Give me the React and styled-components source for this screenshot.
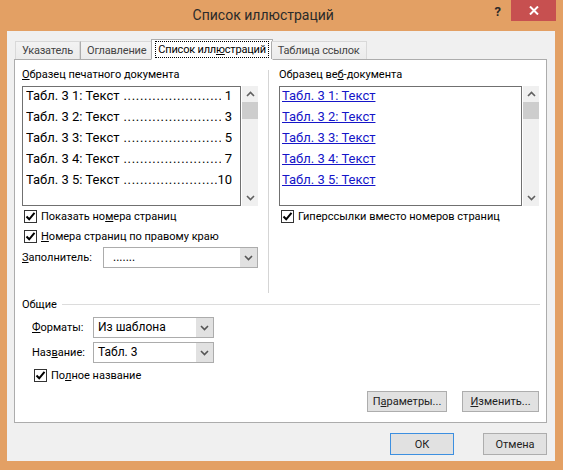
import React from 'react';
import styled, { createGlobalStyle } from 'styled-components';

const GlobalStyle = createGlobalStyle`
  html, body {
    margin: 0;
    padding: 0;
    background: #e3a064;
  }
  body {
    font-family: Roboto, 'Noto Sans', sans-serif;
    font-size: 11px;
    color: #000;
  }
`;

const Window = styled.div`
  width: 563px;
  height: 470px;
  background: #e3a064;
  display: flex;
  flex-direction: column;
`;

const TitleBar = styled.div`
  height: 31px;
  display: flex;
  align-items: flex-start;
  flex-shrink: 0;
`;

const Title = styled.div`
  flex: 1;
  padding-left: 32px;
  text-align: center;
  font-size: 14px;
  line-height: 31px;
  color: #2a2a2a;
`;

const HelpMark = styled.span`
  font-weight: bold;
  font-size: 13px;
  line-height: 24px;
  color: #2a2a2a;
  margin-right: 10px;
`;

const CloseButton = styled.div`
  width: 45px;
  height: 21px;
  margin-right: 7px;
  background: #c75050;
  display: flex;
  align-items: center;
  justify-content: center;
`;

const Client = styled.div`
  flex: 1;
  margin: 0 8px 9px 7px;
  background: #f0f0f0;
  padding: 7px 8px 0 7px;
  display: flex;
  flex-direction: column;
`;

const TabRow = styled.div`
  height: 21px;
  display: flex;
  align-items: flex-end;
  padding-left: 1px;
  position: relative;
  z-index: 1;
`;

const Tab = styled.div`
  height: ${p => (p.$active ? '21px' : '18px')};
  box-sizing: border-box;
  padding: 0 ${p => (p.$active ? '4px' : '6px')};
  border: 1px solid ${p => (p.$active ? '#acacac' : '#d9d9d9')};
  border-bottom: ${p => (p.$active ? '1px solid #fff' : 'none')};
  margin-left: ${p => (p.$active ? '-2px' : '0')};
  margin-right: ${p => (p.$active ? '-2px' : '0')};
  background: ${p => (p.$active ? '#fff' : 'linear-gradient(#f3f3f3, #ebebeb)')};
  color: ${p => (p.$active ? '#000' : '#444')};
  font-size: 11px;
  letter-spacing: -0.2px;
  display: flex;
  align-items: center;
  white-space: nowrap;
  margin-bottom: ${p => (p.$active ? '-1px' : '0')};
  & + & { border-left: ${p => (p.$active ? '1px solid #acacac' : 'none')}; }
`;

const FocusText = styled.span`
  outline: 1px dotted #000;
  padding: 0 2px;
  line-height: 15px;
`;

const Panel = styled.div`
  height: 364px;
  box-sizing: border-box;
  border: 1px solid #acacac;
  background: #fff;
  padding: 8px 7px 0 7px;
  display: flex;
  flex-direction: column;
`;

const TopSection = styled.div`
  display: grid;
  grid-template-columns: 236px 1px 260px;
  column-gap: 10px;
  height: 225px;
`;

const Divider = styled.div`
  background: #d5d5d5;
  margin-top: 2px;
`;

const Column = styled.div`
  display: flex;
  flex-direction: column;
`;

const GroupLabel = styled.div`
  line-height: 14px;
  height: 14px;
  margin-bottom: 4px;
  white-space: nowrap;
`;

const PreviewRow = styled.div`
  display: flex;
  height: 120px;
`;

const ListBox = styled.div`
  flex: 1;
  border: 1px solid #707070;
  background: #fff;
  overflow: hidden;
  padding: ${p => (p.$web ? '0 0 0 2px' : '0 8px 0 3px')};
  font-size: 13px;
`;

const Entry = styled.div`
  height: 21px;
  line-height: 18px;
  display: flex;
  white-space: nowrap;
  overflow: hidden;
`;

const Leader = styled.span`
  flex: 1;
  overflow: hidden;
  margin: 0 ${p => p.$gap}px 0 4px;
  &::before {
    content: '..................................................................................';
    letter-spacing: 0.7px;
  }
`;

const Link = styled.span`
  color: #1515c8;
  text-decoration: underline;
`;

const ScrollBar = styled.div`
  width: 16px;
  margin-left: 1px;
  background: #f0f0f0;
  display: flex;
  flex-direction: column;
  align-items: center;
`;

const ScrollArrow = styled.div`
  height: 16px;
  display: flex;
  align-items: center;
  justify-content: center;
`;

const Thumb = styled.div`
  width: 16px;
  height: 17px;
  background: #cdcdcd;
`;

const ScrollSpace = styled.div`
  flex: 1;
`;

const CheckRow = styled.label`
  height: 20px;
  display: flex;
  align-items: center;
  gap: 4px;
  margin-left: ${p => p.$indent || 2}px;
  margin-top: ${p => p.$top || 0}px;
  white-space: nowrap;
`;

const Box = styled.span`
  width: 13px;
  height: 13px;
  box-sizing: border-box;
  border: 1px solid #333;
  background: #fff;
  display: flex;
  align-items: center;
  justify-content: center;
`;

const FieldRow = styled.div`
  display: flex;
  align-items: center;
  height: 21px;
  margin-top: ${p => p.$top || 0}px;
  margin-left: ${p => p.$indent || 0}px;
`;

const FieldLabel = styled.span`
  width: ${p => p.$w}px;
  white-space: nowrap;
`;

const Combo = styled.div`
  width: ${p => p.$w}px;
  height: 21px;
  box-sizing: border-box;
  border: 1px solid #acacac;
  background: #fff;
  display: flex;
`;

const ComboText = styled.span`
  flex: 1;
  padding-left: ${p => p.$pad || 4}px;
  line-height: 19px;
  font-size: 12px;
  white-space: nowrap;
`;

const ComboButton = styled.span`
  width: 17px;
  background: #e1e1e1;
  display: flex;
  align-items: center;
  justify-content: center;
`;

const SectionHead = styled.div`
  display: flex;
  align-items: center;
  height: 14px;
  margin-top: 4px;
  gap: 5px;
  &::after {
    content: '';
    flex: 1;
    height: 1px;
    background: #dcdcdc;
    margin-right: -1px;
  }
`;

const ButtonRow = styled.div`
  display: flex;
  justify-content: flex-end;
  gap: ${p => p.$gap}px;
  margin-top: ${p => p.$top}px;
`;

const Button = styled.div`
  width: ${p => p.$w}px;
  height: ${p => p.$h}px;
  box-sizing: border-box;
  border: 1px solid ${p => (p.$default ? '#3c8fe0' : '#adadad')};
  background: #e1e1e1;
  display: flex;
  align-items: center;
  justify-content: center;
  color: #222;
  white-space: nowrap;
`;

const Chevron = ({ up, color = '#555' }) => (
  <svg width="9" height="6" viewBox="0 0 9 6">
    <polyline
      points={up ? '1,5 4.5,1.5 8,5' : '1,1 4.5,4.5 8,1'}
      fill="none"
      stroke={color}
      strokeWidth="1.6"
    />
  </svg>
);

const Check = ({ checked }) => (
  <Box>
    {checked && (
      <svg width="11" height="11" viewBox="0 0 11 11">
        <path d="M1.5 5.5 L4.2 8.3 L9.5 1.8" fill="none" stroke="#000" strokeWidth="2" />
      </svg>
    )}
  </Box>
);

const Scroll = () => (
  <ScrollBar>
    <ScrollArrow><Chevron up color="#606060" /></ScrollArrow>
    <Thumb />
    <ScrollSpace />
    <ScrollArrow><Chevron color="#606060" /></ScrollArrow>
  </ScrollBar>
);

const entries = [
  ['1: Текст', '1'],
  ['2: Текст', '3'],
  ['3: Текст', '5'],
  ['4: Текст', '7'],
  ['5: Текст', '10'],
];

export default function App() {
  return (
    <>
      <GlobalStyle />
      <Window>
        <TitleBar>
          <Title>Список иллюстраций</Title>
          <HelpMark>?</HelpMark>
          <CloseButton>
            <svg width="10" height="9" viewBox="0 0 10 9">
              <path d="M1 0.5 L9 8.5 M9 0.5 L1 8.5" stroke="#fff" strokeWidth="2" />
            </svg>
          </CloseButton>
        </TitleBar>
        <Client>
          <TabRow>
            <Tab>Указатель</Tab>
            <Tab>Оглавление</Tab>
            <Tab $active>
              <FocusText>Список илл<u>ю</u>страций</FocusText>
            </Tab>
            <Tab>Таблица ссылок</Tab>
          </TabRow>
          <Panel>
            <TopSection>
              <Column>
                <GroupLabel><u>О</u>бразец печатного документа</GroupLabel>
                <PreviewRow>
                  <ListBox>
                    {entries.map(([t, n]) => (
                      <Entry key={t}>
                        <span>Табл. 3 {t}</span>
                        <Leader $gap={n.length > 1 ? 0 : 4} />
                        <span>{n}</span>
                      </Entry>
                    ))}
                  </ListBox>
                  <Scroll />
                </PreviewRow>
                <CheckRow>
                  <Check checked />
                  <span>Показать но<u>м</u>ера страниц</span>
                </CheckRow>
                <CheckRow>
                  <Check checked />
                  <span><u>Н</u>омера страниц по правому краю</span>
                </CheckRow>
                <FieldRow $top={1}>
                  <FieldLabel $w={81}><u>З</u>аполнитель:</FieldLabel>
                  <Combo $w={155}>
                    <ComboText $pad={9}>.......</ComboText>
                    <ComboButton><Chevron /></ComboButton>
                  </Combo>
                </FieldRow>
              </Column>
              <Divider />
              <Column>
                <GroupLabel>Образец ве<u>б</u>-документа</GroupLabel>
                <PreviewRow>
                  <ListBox $web>
                    {entries.map(([t]) => (
                      <Entry key={t}>
                        <Link>Табл. 3 {t}</Link>
                      </Entry>
                    ))}
                  </ListBox>
                  <Scroll />
                </PreviewRow>
                <CheckRow>
                  <Check checked />
                  <span>Гиперссылки вместо номеров страниц</span>
                </CheckRow>
              </Column>
            </TopSection>
            <SectionHead>Общие</SectionHead>
            <FieldRow $top={6} $indent={10}>
              <FieldLabel $w={61}><u>Ф</u>орматы:</FieldLabel>
              <Combo $w={121}>
                <ComboText>Из шаблона</ComboText>
                <ComboButton><Chevron /></ComboButton>
              </Combo>
            </FieldRow>
            <FieldRow $top={4} $indent={10}>
              <FieldLabel $w={61}>Наз<u>в</u>ание:</FieldLabel>
              <Combo $w={121}>
                <ComboText>Табл. 3</ComboText>
                <ComboButton><Chevron /></ComboButton>
              </Combo>
            </FieldRow>
            <CheckRow $indent={12} $top={2}>
              <Check checked />
              <span>По<u>л</u>ное название</span>
            </CheckRow>
            <ButtonRow $gap={15} $top={6}>
              <Button $w={80} $h={21}>П<u>а</u>раметры...</Button>
              <Button $w={77} $h={21}><u>И</u>зменить...</Button>
            </ButtonRow>
          </Panel>
          <ButtonRow $gap={29} $top={10}>
            <Button $w={64} $h={22} $default>ОК</Button>
            <Button $w={64} $h={22}>Отмена</Button>
          </ButtonRow>
        </Client>
      </Window>
    </>
  );
}
